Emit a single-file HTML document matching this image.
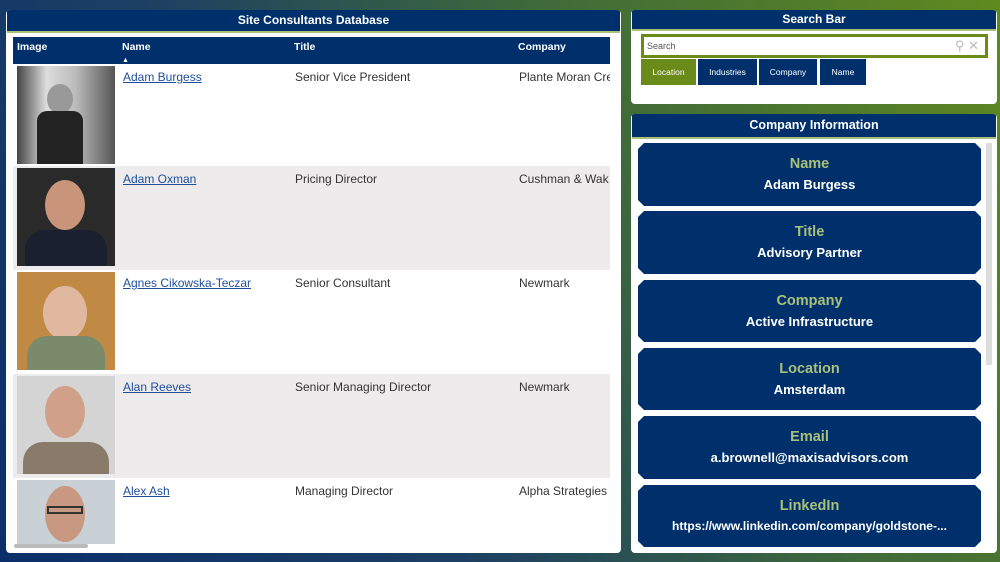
<!DOCTYPE html>
<html><head><meta charset="utf-8"><style>
*{margin:0;padding:0;box-sizing:border-box}
body{width:1000px;height:562px;overflow:hidden;position:relative;font-family:"Liberation Sans",sans-serif;background:linear-gradient(60deg,#0a2f6a 0%,#1c3f64 35%,#3f6a3a 65%,#5f8a1f 100%)}
.panel{position:absolute;background:#fff;border-radius:4px;overflow:hidden}
.ttl{background:#00306b;color:#fff;font-weight:bold;font-size:12px;text-align:center;border-bottom:2px solid #a9c07a}
.th{position:absolute;top:27px;height:27px;background:#00306b;color:#fff;font-weight:bold;font-size:10.5px;padding:4px 4px}
.row{position:absolute;left:7px;width:597px;height:104px}
.cell{position:absolute;top:6px;font-size:12px;color:#333;white-space:nowrap}
.nm{color:#1f4e9c;text-decoration:underline}
.ph{position:absolute;left:4px;top:2px;width:98px;height:98px;overflow:hidden}
.card{position:absolute;left:7px;width:343px;background:#00306b;clip-path:polygon(6px 0,337px 0,343px 6px,343px calc(100% - 6px),337px 100%,6px 100%,0 calc(100% - 6px),0 6px);text-align:center}
.card b{display:block;color:#a9c07a;font-size:14.5px;margin-top:13px}
.card span{display:block;color:#fff;font-size:13px;font-weight:bold;margin-top:5px;white-space:nowrap}
.btn{position:absolute;top:49px;height:26px;background:#00306b;color:#fff;font-size:8.5px;text-align:center;line-height:26px}
</style></head><body>
<div class="panel" style="left:6px;top:10px;width:615px;height:543px">
 <div class="ttl" style="height:23px;line-height:20px;margin:0 1px">Site Consultants Database</div>
 <div class="th" style="left:7px;width:105px">Image</div>
 <div class="th" style="left:112px;width:172px">Name<br><span style="font-size:7px">▲</span></div>
 <div class="th" style="left:284px;width:224px">Title</div>
 <div class="th" style="left:508px;width:96px">Company</div>
 <div class="row" style="top:54px;background:#fff"><div class="ph" style="background:linear-gradient(90deg,#444 0,#ddd 30%,#bbb 60%,#555 100%)"><div style="position:absolute;left:30px;top:18px;width:26px;height:30px;border-radius:50%;background:#999"></div><div style="position:absolute;left:20px;top:45px;width:46px;height:60px;background:#222;border-radius:10px 10px 0 0"></div></div>
  <div class="cell nm" style="left:110px">Adam Burgess</div><div class="cell" style="left:282px">Senior Vice President</div><div class="cell" style="left:506px;width:91px;overflow:hidden">Plante Moran Cre</div></div>
 <div class="row" style="top:156px;background:#edebeb"><div class="ph" style="background:#2a2a2a"><div style="position:absolute;left:28px;top:12px;width:40px;height:50px;border-radius:50%;background:#c8957a"></div><div style="position:absolute;left:8px;top:62px;width:82px;height:40px;background:#1a2030;border-radius:20px 20px 0 0"></div></div>
  <div class="cell nm" style="left:110px">Adam Oxman</div><div class="cell" style="left:282px">Pricing Director</div><div class="cell" style="left:506px;width:91px;overflow:hidden">Cushman &amp; Wak</div></div>
 <div class="row" style="top:260px;background:#fff"><div class="ph" style="background:#c08a45"><div style="position:absolute;left:26px;top:14px;width:44px;height:54px;border-radius:50%;background:#e0b8a0"></div><div style="position:absolute;left:10px;top:64px;width:78px;height:40px;background:#7a8a6a;border-radius:20px 20px 0 0"></div></div>
  <div class="cell nm" style="left:110px">Agnes Cikowska-Teczar</div><div class="cell" style="left:282px">Senior Consultant</div><div class="cell" style="left:506px">Newmark</div></div>
 <div class="row" style="top:364px;background:#edebeb"><div class="ph" style="background:#d4d4d4"><div style="position:absolute;left:28px;top:10px;width:40px;height:52px;border-radius:50%;background:#d0a088"></div><div style="position:absolute;left:6px;top:66px;width:86px;height:40px;background:#8a7a6a;border-radius:20px 20px 0 0"></div></div>
  <div class="cell nm" style="left:110px">Alan Reeves</div><div class="cell" style="left:282px">Senior Managing Director</div><div class="cell" style="left:506px">Newmark</div></div>
 <div class="row" style="top:468px;height:68px;background:#fff"><div class="ph" style="height:64px;background:#c9d0d6"><div style="position:absolute;left:28px;top:6px;width:40px;height:56px;border-radius:50%;background:#c89880"></div><div style="position:absolute;left:30px;top:26px;width:36px;height:8px;border:2px solid #333"></div></div>
  <div class="cell nm" style="left:110px">Alex Ash</div><div class="cell" style="left:282px">Managing Director</div><div class="cell" style="left:506px;width:91px;overflow:hidden">Alpha Strategies</div></div>
 <div style="position:absolute;left:8px;top:534px;width:74px;height:4px;background:#bbb;border-radius:2px"></div>
</div>

<div class="panel" style="left:631px;top:10px;width:366px;height:94px">
 <div class="ttl" style="height:21px;line-height:19px;margin:0 1px">Search Bar</div>
 <div style="position:absolute;left:10px;top:24px;width:347px;height:24px;border:3px solid #6a8a1a;font-size:9px;color:#555;padding:4px 3px">Search<span style="position:absolute;right:6px;top:1px;color:#bbb;font-size:13px">⚲ ✕</span></div>
 <div class="btn" style="left:10px;width:55px;background:#6a8a1a">Location</div>
 <div class="btn" style="left:67px;width:59px">Industries</div>
 <div class="btn" style="left:128px;width:58px">Company</div>
 <div class="btn" style="left:189px;width:46px">Name</div>
</div>

<div class="panel" style="left:631px;top:114px;width:366px;height:439px">
 <div class="ttl" style="height:25px;line-height:23px;font-size:12.5px;margin:0 1px">Company Information</div>
 <div style="position:absolute;left:355px;top:29px;width:6px;height:222px;background:#ddd"></div>
 <div class="card" style="top:29px;height:63px"><b>Name</b><span>Adam Burgess</span></div>
 <div class="card" style="top:97px;height:63px"><b>Title</b><span>Advisory Partner</span></div>
 <div class="card" style="top:166px;height:62px"><b>Company</b><span>Active Infrastructure</span></div>
 <div class="card" style="top:234px;height:62px"><b>Location</b><span>Amsterdam</span></div>
 <div class="card" style="top:302px;height:63px"><b>Email</b><span>a.brownell@maxisadvisors.com</span></div>
 <div class="card" style="top:371px;height:62px"><b>LinkedIn</b><span style="font-size:12px">https://www.linkedin.com/company/goldstone-...</span></div>
</div>
</body></html>
